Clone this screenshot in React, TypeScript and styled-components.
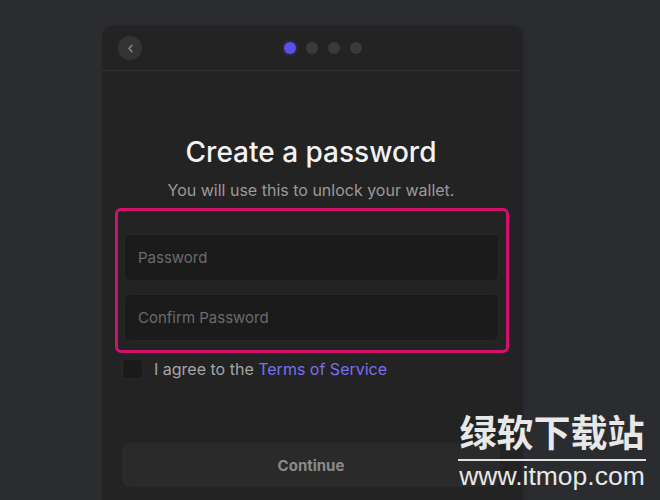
import { ChevronLeft } from 'lucide-react';
import styled, { createGlobalStyle } from 'styled-components';

const GlobalStyle = createGlobalStyle`
  html, body {
    margin: 0;
    padding: 0;
    background: #2b2c30;
  }
  body {
    font-family: 'Inter', 'Liberation Sans', sans-serif;
  }
`;

const Page = styled.div`
  position: relative;
  width: 660px;
  height: 500px;
  overflow: hidden;
  padding: 26px 0 0 102px;
  box-sizing: border-box;
`;

const Panel = styled.div`
  width: 418px;
  height: 480px;
  background: #232323;
  border-radius: 10px 10px 0 0;
  box-shadow: 3px 0 4px rgba(0, 0, 0, 0.25);
  display: flex;
  flex-direction: column;
`;

const Header = styled.div`
  height: 44px;
  border-bottom: 1px solid #313131;
  display: flex;
  align-items: center;
  position: relative;
  padding-left: 16px;
`;

const BackButton = styled.button`
  width: 24px;
  height: 24px;
  border-radius: 50%;
  border: none;
  background: #333333;
  color: #8a8a8a;
  display: flex;
  align-items: center;
  justify-content: center;
  padding: 0;
`;

const Steps = styled.div`
  position: absolute;
  left: 182px;
  top: 16px;
  display: flex;
  gap: 10px;
`;

const Dot = styled.span<{ $active?: boolean }>`
  width: 12px;
  height: 12px;
  border-radius: 50%;
  background: ${(p) => (p.$active ? '#5b50ea' : '#3a3a3a')};
  box-shadow: ${(p) => (p.$active ? '0 0 4px rgba(91, 80, 234, 0.5)' : 'none')};
`;

const Content = styled.div`
  padding: 0 20px;
  display: flex;
  flex-direction: column;
`;

const Title = styled.h1`
  margin: 64px 0 0;
  text-align: center;
  font-size: 28px;
  line-height: 34px;
  font-weight: 500;
  color: #f2f2f2;
`;

const Subtitle = styled.p`
  margin: 11px 0 0;
  text-align: center;
  font-size: 16px;
  line-height: 20px;
  color: #9a9a9a;
`;

const Highlight = styled.div`
  margin: 8px -9px 0 -7px;
  border: 3px solid #d4106e;
  border-radius: 6px;
  padding: 23px 7px 9px 6px;
  display: flex;
  flex-direction: column;
  gap: 13px;
`;

const Input = styled.input`
  height: 47px;
  box-sizing: border-box;
  border: 1px solid #262626;
  border-radius: 6px;
  background: #1b1b1b;
  padding: 0 13px;
  font-family: 'Inter', 'Liberation Sans', sans-serif;
  font-size: 15px;
  color: #ddd;
  outline: none;
  &::placeholder {
    color: #6b6b6b;
  }
`;

const AgreeRow = styled.label`
  margin-top: 6px;
  display: flex;
  align-items: center;
  gap: 11px;
  font-size: 16px;
  color: #a6a6a6;
`;

const Checkbox = styled.span`
  width: 21px;
  height: 20px;
  border-radius: 4px;
  background: #1a1a1a;
  border: 1px solid #262626;
  box-sizing: border-box;
`;

const TermsLink = styled.span`
  color: #7a6ff0;
`;

const ContinueButton = styled.button`
  margin-top: 64px;
  height: 44px;
  border: none;
  border-radius: 8px;
  background: #2a2a2a;
  color: #8a8a8a;
  font-family: 'Inter', 'Liberation Sans', sans-serif;
  font-size: 15px;
  font-weight: 700;
`;

const Watermark = styled.div`
  position: absolute;
  left: 456px;
  top: 408px;
  width: 192px;
  display: flex;
  flex-direction: column;
  align-items: center;
  color: #e8e8e8;
  white-space: nowrap;
`;

const WatermarkTitle = styled.div`
  font-family: 'Noto Sans CJK SC', sans-serif;
  font-weight: 700;
  font-size: 37px;
  line-height: 46px;
`;

const WatermarkRule = styled.div`
  align-self: stretch;
  height: 2px;
  background: #e0e0e0;
  margin: 5px 2px 0;
`;

const WatermarkUrl = styled.div`
  font-family: 'Liberation Sans', Arial, sans-serif;
  font-size: 26.5px;
  line-height: 30px;
`;

export default function App() {
  return (
    <Page>
      <GlobalStyle />
      <Panel>
        <Header>
          <BackButton>
            <ChevronLeft size={13} strokeWidth={2.5} />
          </BackButton>
          <Steps>
            <Dot $active />
            <Dot />
            <Dot />
            <Dot />
          </Steps>
        </Header>
        <Content>
          <Title>Create a password</Title>
          <Subtitle>You will use this to unlock your wallet.</Subtitle>
          <Highlight>
            <Input type="password" placeholder="Password" />
            <Input type="password" placeholder="Confirm Password" />
          </Highlight>
          <AgreeRow>
            <Checkbox />
            <span>
              I agree to the <TermsLink>Terms of Service</TermsLink>
            </span>
          </AgreeRow>
          <ContinueButton>Continue</ContinueButton>
        </Content>
      </Panel>
      <Watermark>
        <WatermarkTitle>绿软下载站</WatermarkTitle>
        <WatermarkRule />
        <WatermarkUrl>www.itmop.com</WatermarkUrl>
      </Watermark>
    </Page>
  );
}
